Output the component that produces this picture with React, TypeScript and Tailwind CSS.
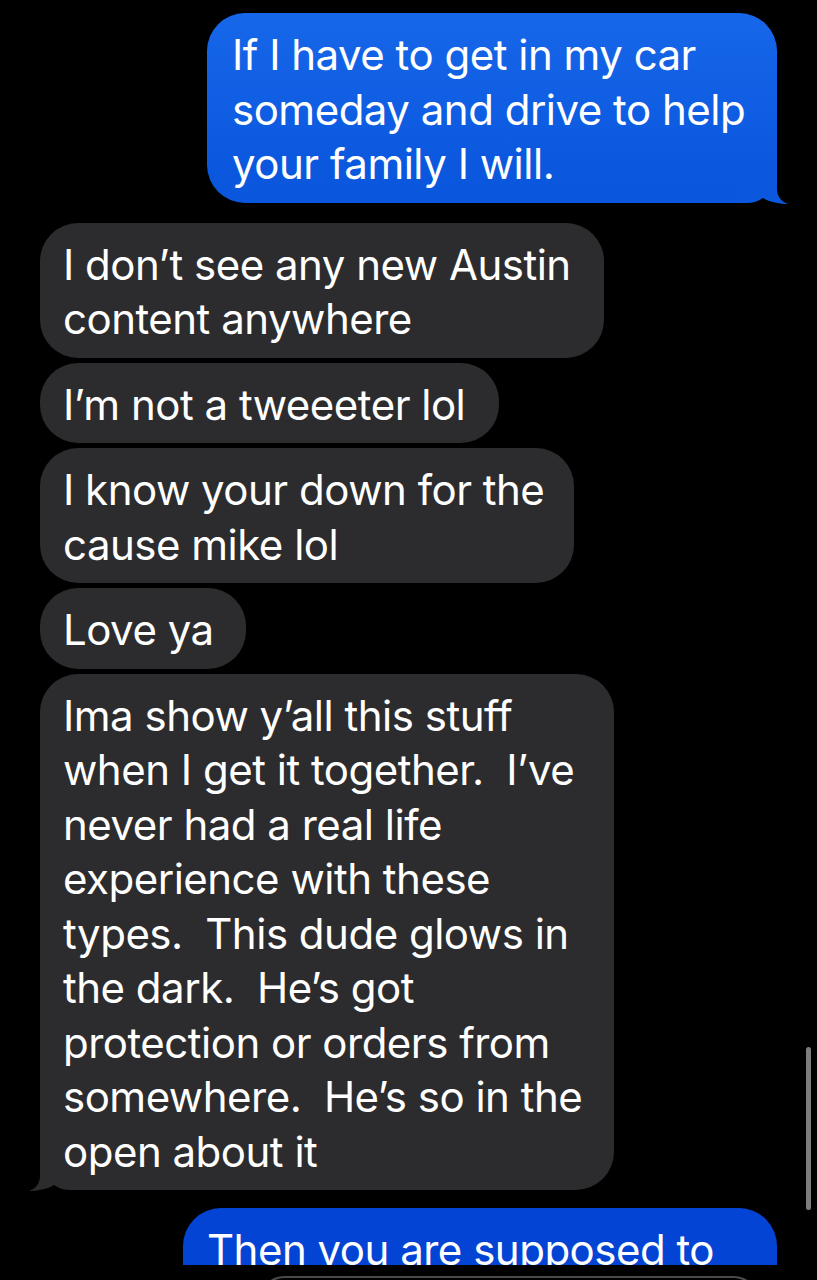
import React from "react";

type Side = "me" | "them";

const Tail = ({ side, color }: { side: Side; color: string }) => (
  <svg
    width="52"
    height="42"
    viewBox="-40 -40 52 42"
    className={
      side === "me"
        ? "absolute right-[-12px] bottom-[-2px]"
        : "absolute left-[-12px] bottom-[-2px] -scale-x-100"
    }
  >
    <path
      d="M-40,-40 L0,-40 L0,-14 C0,-6 5,-1 11,1 C4,1 -8,-1 -14,-5 C-18,-2 -24,0 -30,0 L-40,0 Z"
      fill={color}
    />
  </svg>
);

const Bubble = ({
  side,
  lines,
  width,
  tail,
}: {
  side: Side;
  lines: string[];
  width: string;
  tail?: boolean;
}) => {
  const me = side === "me";
  return (
    <div
      className={`relative rounded-[38px] pt-[15px] pb-[11px] ${
        me
          ? "self-end pl-[25px] bg-gradient-to-b from-[#1767ea] via-[#0b58de] via-80% to-[#0a56dd]"
          : "self-start pl-[23px] bg-[#2c2c2e]"
      } ${width}`}
    >
      {tail && <Tail side={side} color={me ? "#0b57dd" : "#2c2c2e"} />}
      <div className="relative text-white text-[42px] tracking-[-0.5px] leading-[54.5px] whitespace-pre">
        {lines.map((l, i) => (
          <div key={i}>{l}</div>
        ))}
      </div>
    </div>
  );
};

export default function App() {
  return (
    <div
      className="relative h-[1280px] w-[817px] overflow-hidden bg-black"
      style={{ fontFamily: "Inter, 'Liberation Sans', sans-serif" }}
    >
      <div className="flex flex-col pt-[13px] pl-[40px] pr-[40px]">
        <Bubble
          side="me"
          width="w-[570px]"
          tail
          lines={["If I have to get in my car", "someday and drive to help", "your family I will."]}
        />
        <div className="flex flex-col gap-[5px] mt-[20px]">
          <Bubble side="them" width="w-[564px]" lines={["I don’t see any new Austin", "content anywhere"]} />
          <Bubble side="them" width="w-[459px]" lines={["I’m not a tweeeter lol"]} />
          <Bubble side="them" width="w-[534px]" lines={["I know your down for the", "cause mike lol"]} />
          <Bubble side="them" width="w-[206px]" lines={["Love ya"]} />
          <Bubble
            side="them"
            width="w-[574px]"
            tail
            lines={[
              "Ima show y’all this stuff",
              "when I get it together.  I’ve",
              "never had a real life",
              "experience with these",
              "types.  This dude glows in",
              "the dark.  He’s got",
              "protection or orders from",
              "somewhere.  He’s so in the",
              "open about it",
            ]}
          />
        </div>
        <div className="self-end mt-[18px] w-[594px] h-[57px] overflow-hidden rounded-t-[38px] bg-[#0444d4] pl-[24px] pt-[15px]">
          <div className="text-white text-[42px] tracking-[-0.5px] leading-[54.5px] whitespace-pre">
            Then you are supposed to
          </div>
        </div>
        <div className="mt-[11px] ml-[220px] w-[498px] h-[40px] rounded-t-[24px] border-t-2 border-x-2 border-[#4a4a4c]" />
      </div>
      <div className="absolute left-[806px] top-[1047px] w-[5px] h-[163px] rounded-full bg-[#7d7d7d]" />
    </div>
  );
}
